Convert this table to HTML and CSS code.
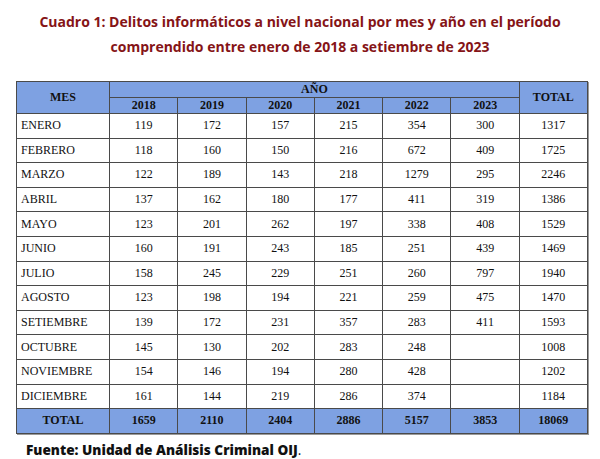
FILE: index.html
```html
<!DOCTYPE html>
<html lang="es">
<head>
<meta charset="utf-8">
<link rel="stylesheet" href="styles.css">
</head>
<body>
<div class="page">
  <h1 class="title">Cuadro 1: Delitos informáticos a nivel nacional por mes y año en el período<br>comprendido entre enero de 2018 a setiembre de 2023</h1>
  <table class="data">
    <colgroup>
      <col class="c-mes"><col class="c-y"><col class="c-y"><col class="c-y"><col class="c-y"><col class="c-y"><col class="c-y"><col class="c-t">
    </colgroup>
    <thead>
      <tr class="h1">
        <th rowspan="2">MES</th>
        <th colspan="6">AÑO</th>
        <th rowspan="2">TOTAL</th>
      </tr>
      <tr class="h2">
        <th>2018</th><th>2019</th><th>2020</th><th>2021</th><th>2022</th><th>2023</th>
      </tr>
    </thead>
    <tbody>
      <tr><td class="m">ENERO</td><td>119</td><td>172</td><td>157</td><td>215</td><td>354</td><td>300</td><td>1317</td></tr>
      <tr><td class="m">FEBRERO</td><td>118</td><td>160</td><td>150</td><td>216</td><td>672</td><td>409</td><td>1725</td></tr>
      <tr><td class="m">MARZO</td><td>122</td><td>189</td><td>143</td><td>218</td><td>1279</td><td>295</td><td>2246</td></tr>
      <tr><td class="m">ABRIL</td><td>137</td><td>162</td><td>180</td><td>177</td><td>411</td><td>319</td><td>1386</td></tr>
      <tr><td class="m">MAYO</td><td>123</td><td>201</td><td>262</td><td>197</td><td>338</td><td>408</td><td>1529</td></tr>
      <tr><td class="m">JUNIO</td><td>160</td><td>191</td><td>243</td><td>185</td><td>251</td><td>439</td><td>1469</td></tr>
      <tr><td class="m">JULIO</td><td>158</td><td>245</td><td>229</td><td>251</td><td>260</td><td>797</td><td>1940</td></tr>
      <tr><td class="m">AGOSTO</td><td>123</td><td>198</td><td>194</td><td>221</td><td>259</td><td>475</td><td>1470</td></tr>
      <tr><td class="m">SETIEMBRE</td><td>139</td><td>172</td><td>231</td><td>357</td><td>283</td><td>411</td><td>1593</td></tr>
      <tr><td class="m">OCTUBRE</td><td>145</td><td>130</td><td>202</td><td>283</td><td>248</td><td></td><td>1008</td></tr>
      <tr><td class="m">NOVIEMBRE</td><td>154</td><td>146</td><td>194</td><td>280</td><td>428</td><td></td><td>1202</td></tr>
      <tr><td class="m">DICIEMBRE</td><td>161</td><td>144</td><td>219</td><td>286</td><td>374</td><td></td><td>1184</td></tr>
    </tbody>
    <tfoot>
      <tr class="tot"><td>TOTAL</td><td>1659</td><td>2110</td><td>2404</td><td>2886</td><td>5157</td><td>3853</td><td>18069</td></tr>
    </tfoot>
  </table>
  <p class="source">Fuente: Unidad de Análisis Criminal OIJ<span class="dot">.</span></p>
</div>
</body>
</html>
```

FILE: styles.css
```css
html, body {
  margin: 0;
  padding: 0;
  background: #ffffff;
}

.page {
  width: 600px;
  height: 459px;
  padding-top: 9px;
  box-sizing: border-box;
}

.title {
  margin: 0;
  font-family: "Open Sans", "Liberation Sans", sans-serif;
  font-weight: 700;
  font-size: 14px;
  line-height: 25px;
  color: #851417;
  text-align: center;
}

.data {
  margin: 22px 0 0 16px;
  width: 571px;
  border-collapse: collapse;
  table-layout: fixed;
  font-family: "Liberation Serif", serif;
  font-size: 12px;
  color: #111;
  border: 1px solid #2b2b2b;
  box-shadow: 1px 1px 0 #9a9a9a;
}

.c-mes { width: 93px; }
.c-y { width: 68.3px; }
.c-t { width: 68px; }

.data th,
.data td {
  border: 1px solid #4a4a4a;
  padding: 0;
  text-align: center;
  vertical-align: middle;
}

.data th {
  background: #7ea1e2;
  font-weight: 700;
}

.h1 { height: 15px; }
.h2 { height: 14px; }

.data tbody tr { height: 24.6px; }

.data td.m {
  text-align: left;
  padding-left: 4px;
}

.tot {
  height: 24.6px;
  background: #7ea1e2;
  font-weight: 700;
}

.source {
  margin: 6px 0 0 26px;
  font-family: "Open Sans", "Liberation Sans", sans-serif;
  font-weight: 800;
  font-size: 13.6px;
  color: #111;
}

.source .dot {
  font-weight: 400;
}
```
